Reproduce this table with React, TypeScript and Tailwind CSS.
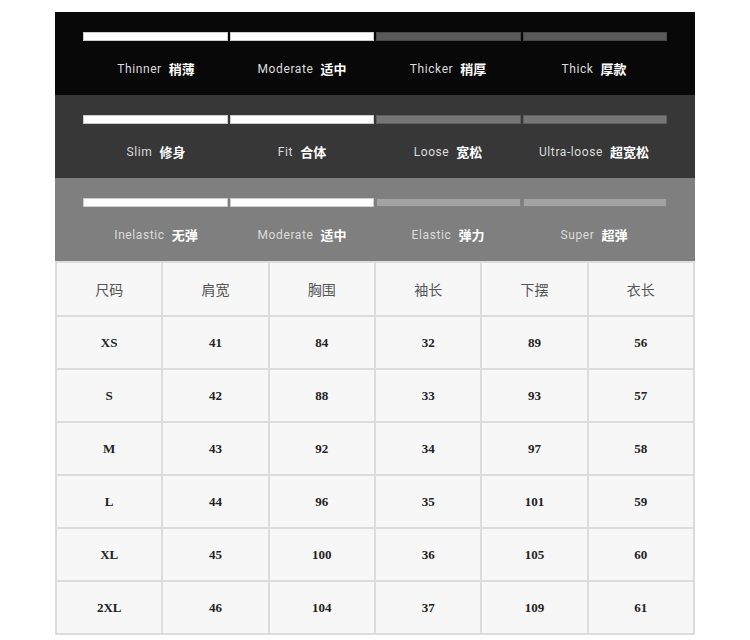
import React from 'react';

type Band = {
  bg: string;
  off: string;
  labels: [string, string][];
};

const bands: Band[] = [
  {
    bg: 'bg-[#080808]',
    off: 'bg-[#5a5a5a]',
    labels: [
      ['Thinner', '稍薄'],
      ['Moderate', '适中'],
      ['Thicker', '稍厚'],
      ['Thick', '厚款'],
    ],
  },
  {
    bg: 'bg-[#373737]',
    off: 'bg-[#767676]',
    labels: [
      ['Slim', '修身'],
      ['Fit', '合体'],
      ['Loose', '宽松'],
      ['Ultra-loose', '超宽松'],
    ],
  },
  {
    bg: 'bg-[#7f7f7f]',
    off: 'bg-[#a3a3a3]',
    labels: [
      ['Inelastic', '无弹'],
      ['Moderate', '适中'],
      ['Elastic', '弹力'],
      ['Super', '超弹'],
    ],
  },
];

const headers = ['尺码', '肩宽', '胸围', '袖长', '下摆', '衣长'];

const rows = [
  ['XS', '41', '84', '32', '89', '56'],
  ['S', '42', '88', '33', '93', '57'],
  ['M', '43', '92', '34', '97', '58'],
  ['L', '44', '96', '35', '101', '59'],
  ['XL', '45', '100', '36', '105', '60'],
  ['2XL', '46', '104', '37', '109', '61'],
];

const cjk = { fontFamily: '"Noto Sans CJK SC", "Noto Sans", sans-serif' };

const App: React.FC = () => {
  return (
    <div className="bg-white min-h-screen pt-[12px]">
      <div className="w-[640px] ml-[55px]">
        {bands.map((band, i) => (
          <div key={i} className={`${band.bg} h-[83px] px-[28px] pt-[20px]`}>
            <div className="grid grid-cols-4 gap-[2px]">
              {band.labels.map((_, j) => (
                <div
                  key={j}
                  className={`h-[9px] ${j < 2 ? 'bg-white' : band.off} border border-black/20`}
                />
              ))}
            </div>
            <div className="grid grid-cols-4 mt-[18px]">
              {band.labels.map(([en, zh], j) => (
                <div key={j} className="flex items-center justify-center gap-[7px] h-[20px]">
                  <span
                    className="text-[12px] text-[#dcdcdc] tracking-[0.6px]"
                    style={{ fontFamily: 'Roboto, "DejaVu Sans", sans-serif' }}
                  >
                    {en}
                  </span>
                  <span className="text-[13px] font-bold text-white" style={cjk}>
                    {zh}
                  </span>
                </div>
              ))}
            </div>
          </div>
        ))}

        <table className="w-full table-fixed border-collapse bg-[#f7f7f7]">
          <thead>
            <tr className="h-[54px]">
              {headers.map((h) => (
                <th
                  key={h}
                  className="border-2 border-[#dcdcdc] text-[14px] font-normal text-[#555]"
                  style={cjk}
                >
                  {h}
                </th>
              ))}
            </tr>
          </thead>
          <tbody>
            {rows.map((r) => (
              <tr key={r[0]} className="h-[53px]">
                {r.map((c, k) => (
                  <td
                    key={k}
                    className="border-2 border-[#dcdcdc] text-center text-[13px] font-bold text-[#222]"
                    style={{ fontFamily: '"Liberation Serif", "DejaVu Serif", serif' }}
                  >
                    {c}
                  </td>
                ))}
              </tr>
            ))}
          </tbody>
        </table>
      </div>
    </div>
  );
};

export default App;
